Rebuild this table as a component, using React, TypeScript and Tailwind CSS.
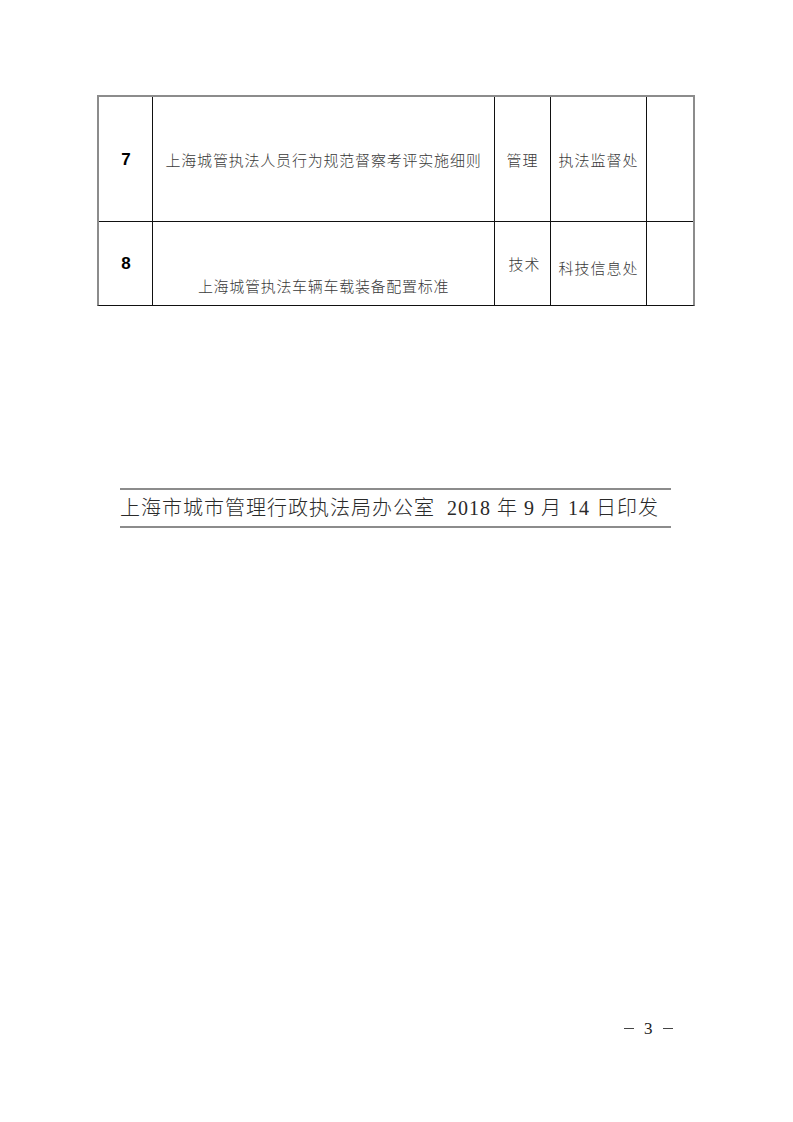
import React from "react";

const cjk = "font-['Noto_Sans_CJK_SC',sans-serif] font-light";
const serif = "font-['Liberation_Serif','Noto_Sans_CJK_SC',serif] font-light";

export default function App() {
  return (
    <div className="w-[793px] h-[1122px] bg-white relative overflow-hidden text-[#1a1a1a]">
      {/* Table */}
      <div className="pt-[95px] pl-[97px]">
        <div className="w-[598px] border-t-2 border-l-2 border-r-2 border-[#8c8c8c] border-b border-b-[#111]">
          {/* Row 7 */}
          <div className="flex h-[125px] border-b border-[#111]">
            <div className="w-[54px] flex items-center justify-center border-r border-[#111]">
              <span className="font-['Liberation_Sans',sans-serif] font-bold text-[17px] leading-none pl-[1px] text-black">7</span>
            </div>
            <div className="w-[342px] flex items-center justify-center border-r border-[#111]">
              <span className={`${cjk} text-[15px] tracking-[0.8px] leading-none text-[#3a3a3a]`}>
                上海城管执法人员行为规范督察考评实施细则
              </span>
            </div>
            <div className="w-[56px] flex items-center justify-center border-r border-[#111]">
              <span className={`${cjk} text-[15px] tracking-[1px] leading-none text-[#3a3a3a]`}>管理</span>
            </div>
            <div className="w-[96px] flex items-center justify-center border-r border-[#111]">
              <span className={`${cjk} text-[15px] tracking-[1px] leading-none text-[#3a3a3a]`}>执法监督处</span>
            </div>
            <div className="flex-1" />
          </div>
          {/* Row 8 */}
          <div className="flex h-[83px]">
            <div className="w-[54px] flex items-center justify-center border-r border-[#111]">
              <span className="font-['Liberation_Sans',sans-serif] font-bold text-[17px] leading-none pl-[1px] text-black">8</span>
            </div>
            <div className="w-[342px] flex flex-col items-center justify-end pb-[12px] border-r border-[#111]">
              <span className={`${cjk} text-[15px] tracking-[0.7px] leading-none text-[#3a3a3a]`}>
                上海城管执法车辆车载装备配置标准
              </span>
            </div>
            <div className="w-[56px] flex items-start justify-center pt-[34px] pl-[4px] border-r border-[#111]">
              <span className={`${cjk} text-[15px] tracking-[1px] leading-none text-[#3a3a3a]`}>技术</span>
            </div>
            <div className="w-[96px] flex items-start justify-center pt-[38px] border-r border-[#111]">
              <span className={`${cjk} text-[15px] tracking-[1px] leading-none text-[#3a3a3a]`}>科技信息处</span>
            </div>
            <div className="flex-1" />
          </div>
        </div>
      </div>

      {/* Footer issuance line */}
      <div className="mt-[182px] ml-[120px] w-[551px] border-t-2 border-b-2 border-[#8c8c8c] h-[40px] flex items-center">
        <span className={`${serif} text-[20px] tracking-[1px] leading-none whitespace-pre text-[#2a2a2a]`}>
          {"上海市城市管理行政执法局办公室  2018 年 9 月 14 日印发"}
        </span>
      </div>

      {/* Page number */}
      <div className="absolute left-[624px] top-[1020px] flex items-center gap-[10px]">
        <span className="block w-[10px] h-[1.5px] bg-[#444]" />
        <span className={`${serif} text-[17px] leading-none text-[#222]`}>3</span>
        <span className="block w-[10px] h-[1.5px] bg-[#444]" />
      </div>
    </div>
  );
}
